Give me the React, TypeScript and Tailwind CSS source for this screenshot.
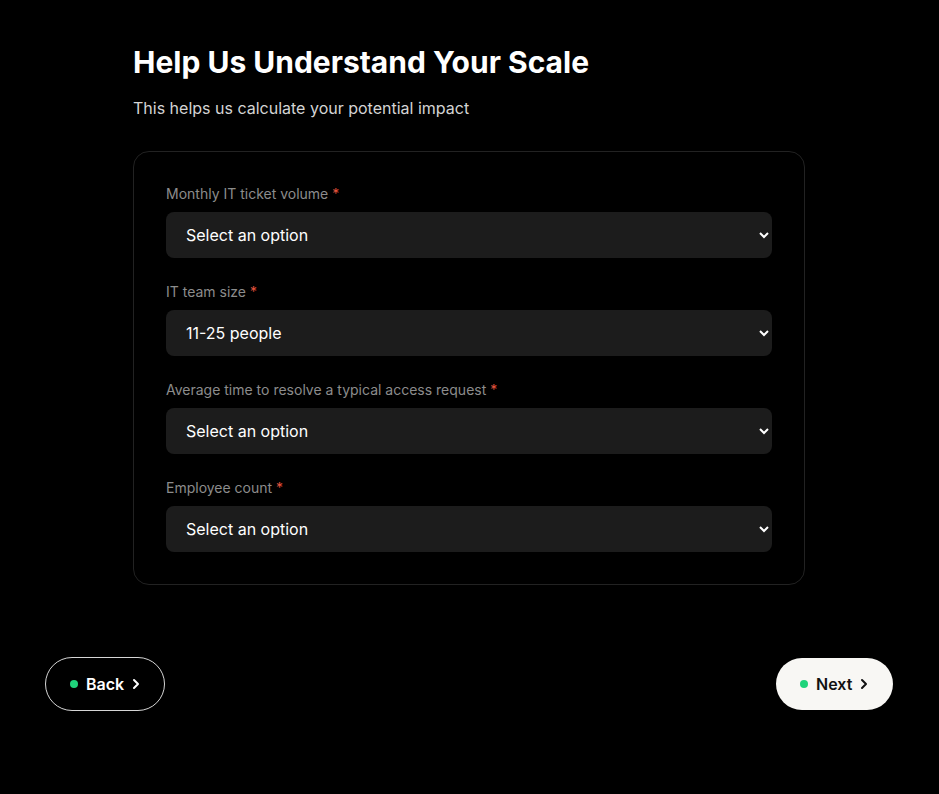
import { ChevronRight } from "lucide-react"

const fields = [
  { label: "Monthly IT ticket volume", value: "", options: ["Under 500", "500-2,000", "2,000-5,000", "5,000+"] },
  { label: "IT team size", value: "11-25 people", options: ["1-10 people", "11-25 people", "26-50 people", "50+ people"] },
  { label: "Average time to resolve a typical access request", value: "", options: ["Under 1 hour", "1-4 hours", "1 day", "Several days"] },
  { label: "Employee count", value: "", options: ["1-100", "101-500", "501-2,000", "2,000+"] },
]

export default function App() {
  return (
    <div className="min-h-screen bg-black text-white" style={{ fontFamily: "Inter, 'Noto Sans', sans-serif" }}>
      <div className="ml-[133px] w-[672px] pt-11">
        <h1 className="text-[30px] leading-9 font-bold text-white">Help Us Understand Your Scale</h1>
        <p className="mt-4 text-base leading-6 text-[#d4d4d4]">This helps us calculate your potential impact</p>

        <div className="mt-[31px] rounded-2xl border border-[#222222] p-8 flex flex-col gap-6">
          {fields.map((f) => (
            <label key={f.label} className="flex flex-col">
              <span className="text-sm leading-5 text-[#8c8c8c] mb-2">
                {f.label} <span className="text-[#e5533d]">*</span>
              </span>
              <select
                defaultValue={f.value}
                className="h-[46px] w-full rounded-lg bg-[#1c1c1c] pl-4 pr-2 text-base text-white outline-none [color-scheme:dark]"
              >
                <option value="">Select an option</option>
                {f.options.map((o) => (
                  <option key={o} value={o}>{o}</option>
                ))}
              </select>
            </label>
          ))}
        </div>
      </div>

      <div className="mt-[72px] flex items-center justify-between pl-[45px] pr-[46px]">
        <button className="flex h-[54px] w-[120px] items-center rounded-full border border-[#d6d6d6] pl-6 text-base font-semibold text-white">
          <span className="mr-2 h-2 w-2 rounded-full bg-[#1fd47b]" />
          <span>Back</span>
          <ChevronRight className="ml-1 h-4 w-4" strokeWidth={3} />
        </button>
        <button className="flex h-[52px] w-[117px] items-center rounded-full bg-[#f8f7f4] pl-6 text-base font-semibold text-[#111111]">
          <span className="mr-2 h-2 w-2 rounded-full bg-[#1fd47b]" />
          <span>Next</span>
          <ChevronRight className="ml-1 h-4 w-4" strokeWidth={3} />
        </button>
      </div>
    </div>
  )
}
